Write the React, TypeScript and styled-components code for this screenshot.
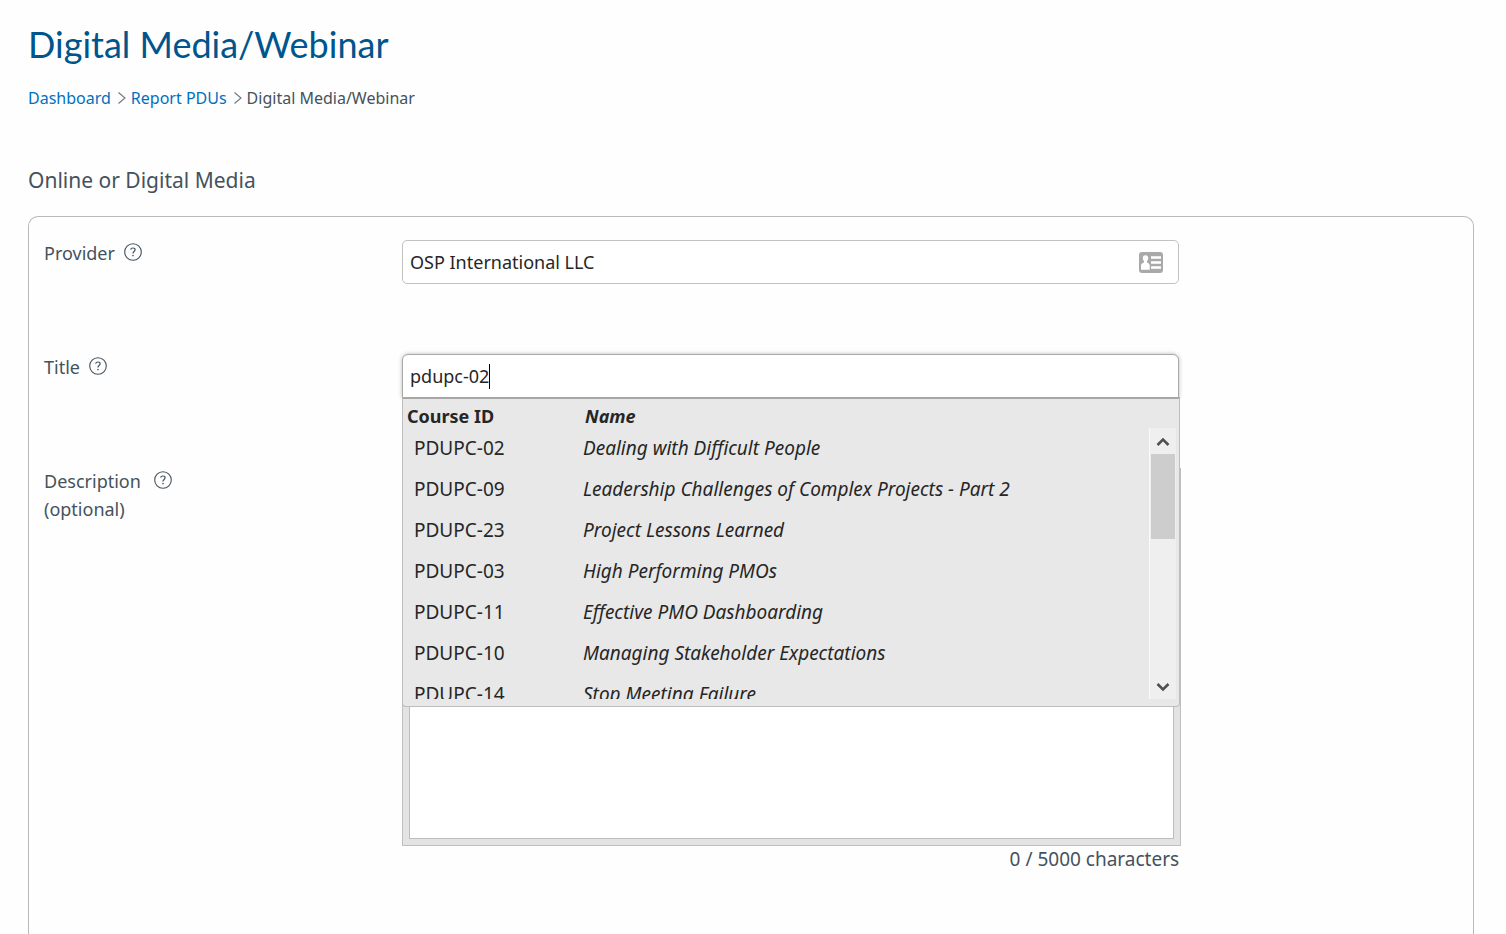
import React, { useState } from "react";
import styled, { createGlobalStyle, css } from "styled-components";

const GlobalStyle = createGlobalStyle`
  *, *::before, *::after { box-sizing: border-box; }
  body {
    margin: 0;
    background: #fefefe;
    color: #44525d;
    font-family: "Noto Sans", "Open Sans", sans-serif;
    font-size: 18px;
    line-height: 28px;
  }
`;

const Page = styled.main`
  min-height: 100vh;
  display: flex;
  flex-direction: column;
  padding: 20px 32px 0 28px;
`;

const PageTitle = styled.h1`
  margin: 0 0 18px;
  color: #00558c;
  font-family: Lato, sans-serif;
  font-size: 36px;
  font-weight: 400;
  line-height: 48px;
`;

const Breadcrumbs = styled.nav`
  display: flex;
  align-items: center;
  gap: 3px;
  margin-bottom: 54px;
  font-size: 16px;
  line-height: 24px;
`;

const Crumb = styled.a`
  color: #0070c0;
  text-decoration: none;
`;

const SectionTitle = styled.h2`
  margin: 0 0 20px;
  font-size: 21px;
  font-weight: 400;
  line-height: 32px;
`;

const Card = styled.form`
  flex: 1;
  display: flex;
  flex-direction: column;
  gap: 69px;
  padding: 22px 16px 64px 15px;
  border: 1px solid #b9b9b9;
  border-bottom: 0;
  border-radius: 10px 10px 0 0;
`;

const Row = styled.div`
  display: grid;
  grid-template-columns: 358px 55%;
`;

const LabelCell = styled.div<{ $gap: number }>`
  display: flex;
  align-items: flex-start;
  gap: ${(p) => p.$gap}px;
`;

const HelpButton = styled.button`
  display: flex;
  padding: 3px 0;
  border: 0;
  background: none;
  color: #44525d;
`;

const Field = styled.div`
  position: relative;
  padding-top: 1px;
`;

const InputBox = styled.div<{ $active?: boolean }>`
  display: flex;
  align-items: center;
  height: 44px;
  padding: 0 15px 0 7px;
  border: 1px solid #c2c2c2;
  border-radius: 5px;
  background: #fff;
  ${(p) =>
    p.$active &&
    css`
      border-color: #a9a9a9;
      border-radius: 6px 6px 0 0;
      box-shadow: 0 0 4px #bbb;
    `}
`;

const TextInput = styled.input<{ $fit?: boolean }>`
  flex: ${(p) => (p.$fit ? "none" : "1")};
  field-sizing: ${(p) => (p.$fit ? "content" : "fixed")};
  min-width: 0;
  padding: 0;
  border: 0;
  outline: 0;
  background: none;
  color: #262626;
  font: inherit;
`;

const Caret = styled.span`
  width: 1px;
  height: 25px;
  background: #000;
`;

const Dropdown = styled.div`
  position: absolute;
  z-index: 1;
  top: 44px;
  left: 0;
  right: -1px;
  height: 310px;
  border: 1px solid #bdbdbd;
  border-top: 2px solid #aaa6a6;
  border-radius: 0 0 4px 4px;
  background: #e8e8e8;
`;

const Results = styled.table`
  display: block;
  color: #262626;
`;

const ResultsHead = styled.thead`
  display: block;
  height: 29px;
`;

const ResultsBody = styled.tbody`
  display: block;
  height: 271px;
  overflow: hidden;
`;

const ResultRow = styled.tr`
  display: grid;
  grid-template-columns: 169px 1fr;
  height: 41px;
  padding: 6px 40px 0 11px;
  font-size: 19px;
`;

const HeadRow = styled.tr`
  display: grid;
  grid-template-columns: 178px 1fr;
  padding: 3px 4px 0;
`;

const HeadCell = styled.th<{ $italic?: boolean }>`
  padding: 0;
  text-align: left;
  font-weight: 700;
  font-style: ${(p) => (p.$italic ? "italic" : "normal")};
`;

const Cell = styled.td<{ $italic?: boolean }>`
  padding: 0;
  white-space: nowrap;
  font-style: ${(p) => (p.$italic ? "italic" : "normal")};
`;

const Scrollbar = styled.div`
  position: absolute;
  top: 29px;
  right: 3px;
  width: 27px;
  height: 271px;
  display: flex;
  flex-direction: column;
  border-left: 1px solid #fafafa;
  background: #efefef;
`;

const ScrollButton = styled.button`
  display: flex;
  align-items: center;
  justify-content: center;
  height: 26px;
  padding: 2px 0 0;
  border: 0;
  background: none;
  color: #505050;
`;

const Thumb = styled.div`
  height: 85px;
  margin: 0 1px;
  background: #cdcdcd;
`;

const Spacer = styled.div`
  flex: 1;
`;

const Editor = styled.div`
  display: flex;
  height: 378px;
  margin-right: -2px;
  padding: 6px;
  border: 1px solid #bfbfbf;
  background: #e3e3e3;
`;

const EditorArea = styled.textarea`
  flex: 1;
  padding: 8px;
  border: 1px solid #bdbdbd;
  outline: 0;
  resize: none;
  background: #fff;
  color: #262626;
  font: inherit;
`;

const Counter = styled.output`
  display: block;
  font-size: 19px;
  line-height: 26px;
  text-align: right;
`;

const HelpIcon = () => (
  <svg width="20" height="20" viewBox="0 0 20 20" fill="none" stroke="currentColor" aria-hidden="true">
    <circle cx="10" cy="10" r="8.3" strokeWidth="1.1" />
    <path d="M7.600 7.700C7.900 6.500 8.800 6 9.900 6c1.300 0 2.200.7 2.200 1.800 0 1.700-2.100 1.700-2.100 3.500v.3" strokeWidth="1.200" />
    <circle cx="10" cy="13.600" r=".8" fill="currentColor" stroke="none" />
  </svg>
);

const ChevronIcon = () => (
  <svg width="14" height="14" viewBox="0 0 14 14" fill="none" stroke="#6d7780" aria-hidden="true">
    <path d="M4.500 1.500 11 7 4.500 12.500" strokeWidth="1.100" />
  </svg>
);

const ContactCardIcon = () => (
  <svg width="24" height="21" viewBox="0 0 24 21" aria-hidden="true">
    <rect width="24" height="21" rx="3" fill="#a9a9a9" />
    <path d="M6.500 3.300c1.700 0 2.700 1.200 2.700 2.800 0 1.300-.5 2.300-1.200 2.900v1.600c1.700.7 2.700 1.600 2.700 3.200v4H2v-4c0-1.600 1.300-2.500 3-3.200V9c-.7-.6-1.200-1.600-1.200-2.900 0-1.600 1-2.800 2.700-2.800z" fill="#fff" />
    <path d="M12 5.500h10M12 10.500h10M12 15.500h10" stroke="#fff" strokeWidth="2.600" />
  </svg>
);

const ArrowIcon = ({ down }: { down?: boolean }) => (
  <svg width="14" height="10" viewBox="0 0 14 10" fill="none" stroke="currentColor" strokeWidth="2.600" aria-hidden="true">
    <path d={down ? "M1.500 2 7 7.500 12.500 2" : "M1.500 8 7 2.500 12.500 8"} />
  </svg>
);

const courses = [
  ["PDUPC-02", "Dealing with Difficult People"],
  ["PDUPC-09", "Leadership Challenges of Complex Projects - Part 2"],
  ["PDUPC-23", "Project Lessons Learned"],
  ["PDUPC-03", "High Performing PMOs"],
  ["PDUPC-11", "Effective PMO Dashboarding"],
  ["PDUPC-10", "Managing Stakeholder Expectations"],
  ["PDUPC-14", "Stop Meeting Failure"],
];

function Help({ topic }: { topic: string }) {
  return (
    <HelpButton type="button" aria-label={`Help: ${topic}`}>
      <HelpIcon />
    </HelpButton>
  );
}

export default function App() {
  const [provider, setProvider] = useState("OSP International LLC");
  const [title, setTitle] = useState("pdupc-02");
  const [description, setDescription] = useState("");

  return (
    <>
      <GlobalStyle />
      <Page>
        <PageTitle>Digital Media/Webinar</PageTitle>
        <Breadcrumbs aria-label="Breadcrumb">
          <Crumb href="#dashboard">Dashboard</Crumb>
          <ChevronIcon />
          <Crumb href="#report">Report PDUs</Crumb>
          <ChevronIcon />
          <span>Digital Media/Webinar</span>
        </Breadcrumbs>
        <SectionTitle>Online or Digital Media</SectionTitle>
        <Card>
          <Row>
            <LabelCell $gap={8}>
              <label htmlFor="provider">Provider</label>
              <Help topic="Provider" />
            </LabelCell>
            <Field>
              <InputBox>
                <TextInput id="provider" value={provider} onChange={(e) => setProvider(e.target.value)} />
                <ContactCardIcon />
              </InputBox>
            </Field>
          </Row>
          <Row>
            <LabelCell $gap={8}>
              <label htmlFor="title">Title</label>
              <Help topic="Title" />
            </LabelCell>
            <Field>
              <InputBox $active>
                <TextInput id="title" $fit value={title} onChange={(e) => setTitle(e.target.value)} />
                <Caret />
              </InputBox>
              <Dropdown>
                <Results>
                  <ResultsHead>
                    <HeadRow>
                      <HeadCell>Course ID</HeadCell>
                      <HeadCell $italic>Name</HeadCell>
                    </HeadRow>
                  </ResultsHead>
                  <ResultsBody>
                    {courses.map(([id, name]) => (
                      <ResultRow key={id}>
                        <Cell>{id}</Cell>
                        <Cell $italic>{name}</Cell>
                      </ResultRow>
                    ))}
                  </ResultsBody>
                </Results>
                <Scrollbar>
                  <ScrollButton type="button" aria-label="Scroll up">
                    <ArrowIcon />
                  </ScrollButton>
                  <Thumb />
                  <Spacer />
                  <ScrollButton type="button" aria-label="Scroll down">
                    <ArrowIcon down />
                  </ScrollButton>
                </Scrollbar>
              </Dropdown>
            </Field>
          </Row>
          <Row>
            <LabelCell $gap={12}>
              <label htmlFor="description">
                Description
                <br />
                (optional)
              </label>
              <Help topic="Description" />
            </LabelCell>
            <Field>
              <Editor>
                <EditorArea id="description" value={description} onChange={(e) => setDescription(e.target.value)} />
              </Editor>
              <Counter htmlFor="description">{description.length} / 5000 characters</Counter>
            </Field>
          </Row>
        </Card>
      </Page>
    </>
  );
}
